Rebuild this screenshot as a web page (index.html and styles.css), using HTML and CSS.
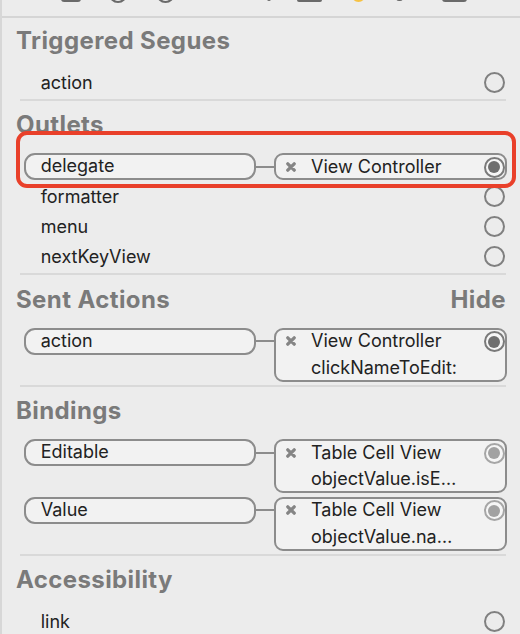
FILE: index.html
```html
<!DOCTYPE html>
<html>
<head>
<meta charset="utf-8">
<link rel="stylesheet" href="styles.css">
</head>
<body>
<div class="panel">
  <div class="toolbar">
    <svg width="518" height="16" viewBox="2 0 518 16">
      <rect x="61" y="-10" width="20" height="12" rx="3" fill="#6a6a6a"/>
      <circle cx="118" cy="-6" r="8" fill="none" stroke="#6a6a6a" stroke-width="2.2"/>
      <circle cx="165.5" cy="-6" r="8" fill="none" stroke="#6a6a6a" stroke-width="2.2"/>
      <rect x="267" y="-6" width="4" height="7" rx="2" fill="#6a6a6a"/>
      <rect x="297" y="-10" width="25" height="12" rx="2" fill="#6a6a6a"/>
      <circle cx="358.5" cy="-5" r="7" fill="#f6c244"/>
      <rect x="396" y="-6" width="7" height="7" rx="3" fill="#6a6a6a"/>
      <rect x="442" y="-10" width="25" height="12" rx="3" fill="#6a6a6a"/>
    </svg>
  </div>

  <section class="sec first">
    <h2 class="sec-title">Triggered Segues</h2>
    <div class="rows">
      <div class="row plain"><span class="name">action</span><span class="port"></span></div>
    </div>
    <div class="sep"></div>
  </section>

  <section class="sec">
    <h2 class="sec-title">Outlets</h2>
    <div class="rows">
      <div class="row linked marked">
        <span class="pill">delegate</span>
        <span class="wire"></span>
        <div class="target single">
          <div class="line">
            <svg class="del" width="10" height="10" viewBox="0 0 10 10"><path d="M1.8 1.8 L8.2 8.2 M8.2 1.8 L1.8 8.2" stroke="#858585" stroke-width="3.3" stroke-linecap="round"/></svg>
            <span class="tname">View Controller</span>
            <span class="port on"></span>
          </div>
        </div>
      </div>
      <div class="row plain"><span class="name">formatter</span><span class="port"></span></div>
      <div class="row plain"><span class="name">menu</span><span class="port"></span></div>
      <div class="row plain"><span class="name">nextKeyView</span><span class="port"></span></div>
    </div>
    <div class="sep"></div>
  </section>

  <section class="sec">
    <h2 class="sec-title"><span>Sent Actions</span><span>Hide</span></h2>
    <div class="rows">
      <div class="row linked">
        <span class="pill">action</span>
        <span class="wire"></span>
        <div class="target">
          <div class="line">
            <svg class="del" width="10" height="10" viewBox="0 0 10 10"><path d="M1.8 1.8 L8.2 8.2 M8.2 1.8 L1.8 8.2" stroke="#858585" stroke-width="3.3" stroke-linecap="round"/></svg>
            <span class="tname">View Controller</span>
            <span class="port on"></span>
          </div>
          <div class="line sub">clickNameToEdit:</div>
        </div>
      </div>
    </div>
    <div class="sep"></div>
  </section>

  <section class="sec">
    <h2 class="sec-title">Bindings</h2>
    <div class="rows">
      <div class="row linked">
        <span class="pill">Editable</span>
        <span class="wire"></span>
        <div class="target">
          <div class="line">
            <svg class="del" width="10" height="10" viewBox="0 0 10 10"><path d="M1.8 1.8 L8.2 8.2 M8.2 1.8 L1.8 8.2" stroke="#858585" stroke-width="3.3" stroke-linecap="round"/></svg>
            <span class="tname">Table Cell View</span>
            <span class="port on dim"></span>
          </div>
          <div class="line sub">objectValue.isE…</div>
        </div>
      </div>
      <div class="row linked">
        <span class="pill">Value</span>
        <span class="wire"></span>
        <div class="target">
          <div class="line">
            <svg class="del" width="10" height="10" viewBox="0 0 10 10"><path d="M1.8 1.8 L8.2 8.2 M8.2 1.8 L1.8 8.2" stroke="#858585" stroke-width="3.3" stroke-linecap="round"/></svg>
            <span class="tname">Table Cell View</span>
            <span class="port on dim"></span>
          </div>
          <div class="line sub">objectValue.na…</div>
        </div>
      </div>
    </div>
    <div class="sep"></div>
  </section>

  <section class="sec">
    <h2 class="sec-title">Accessibility</h2>
    <div class="rows">
      <div class="row plain"><span class="name">link</span><span class="port"></span></div>
    </div>
  </section>
</div>
</body>
</html>
```

FILE: styles.css
```css
html, body {
  margin: 0;
  padding: 0;
  background: #ececec;
}

body {
  font-family: Inter, "Noto Sans", sans-serif;
  color: #222222;
  overflow: hidden;
}

.panel {
  border-left: 2px solid #d7d7d7;
  height: 634px;
  box-sizing: border-box;
  overflow: hidden;
}

.toolbar {
  height: 16px;
  border-bottom: 2px solid #d5d5d5;
}

.toolbar svg {
  display: block;
}

.sec {
  padding: 10.5px 13px 0 14px;
}

.sec.first {
  padding-top: 9px;
}

.sec-title {
  margin: 0 1px 0 0;
  font-size: 24px;
  line-height: 28px;
  font-weight: 700;
  color: #7a7a7a;
  display: flex;
  justify-content: space-between;
  letter-spacing: 0.4px;
}

.rows {
  margin-top: 12px;
  padding-left: 8px;
  display: flex;
  flex-direction: column;
}

.row {
  display: flex;
  align-items: flex-start;
  min-height: 30px;
  padding: 2px 0 1.5px;
  box-sizing: border-box;
  font-size: 18px;
}

.row.plain {
  align-items: center;
  padding: 0;
}

.name {
  flex: 1;
  padding-left: 16.7px;
  line-height: 23px;
}

.port {
  width: 21px;
  height: 21px;
  box-sizing: border-box;
  border: 2px solid #808080;
  border-radius: 50%;
  margin-right: 2.5px;
  flex: none;
}

.port.on {
  display: flex;
  align-items: center;
  justify-content: center;
  margin: 1px 0.5px 0 auto;
  border-color: #7a7a7a;
  background: #f6f6f6;
}

.port.on::before {
  content: "";
  width: 12px;
  height: 12px;
  border-radius: 50%;
  background: #6f6f6f;
}

.port.on.dim {
  border-color: #a6a6a6;
}

.port.on.dim::before {
  background: #a2a2a2;
}

.pill {
  width: 232px;
  height: 27px;
  box-sizing: border-box;
  border: 2px solid #8c8c8c;
  border-radius: 11px;
  background: #f2f2f2;
  padding-left: 14.7px;
  line-height: 22px;
  flex: none;
}

.wire {
  width: 18px;
  height: 2px;
  margin-top: 12.5px;
  background: #8c8c8c;
  flex: none;
}

.target {
  width: 233px;
  height: 54px;
  box-sizing: border-box;
  border: 2px solid #8c8c8c;
  border-radius: 9px;
  background: #f2f2f2;
  flex: none;
}

.target.single {
  height: 27px;
}

.line {
  display: flex;
  align-items: center;
  height: 23px;
  line-height: 22px;
}

.line.sub {
  margin-top: 3px;
  height: 24px;
  line-height: 24px;
  padding-left: 35px;
}

.del {
  flex: none;
  margin-left: 10px;
  margin-right: 15px;
}

.tname {
  flex: 1;
}

.sep {
  height: 2px;
  margin: 1.5px 1px 0 4px;
  background: #d9d9d9;
}

.marked {
  position: relative;
}

.marked::after {
  content: "";
  position: absolute;
  top: -20px;
  bottom: -6px;
  left: -8px;
  right: -9px;
  border: 4px solid #e9402a;
  border-radius: 11px;
  pointer-events: none;
}
```
